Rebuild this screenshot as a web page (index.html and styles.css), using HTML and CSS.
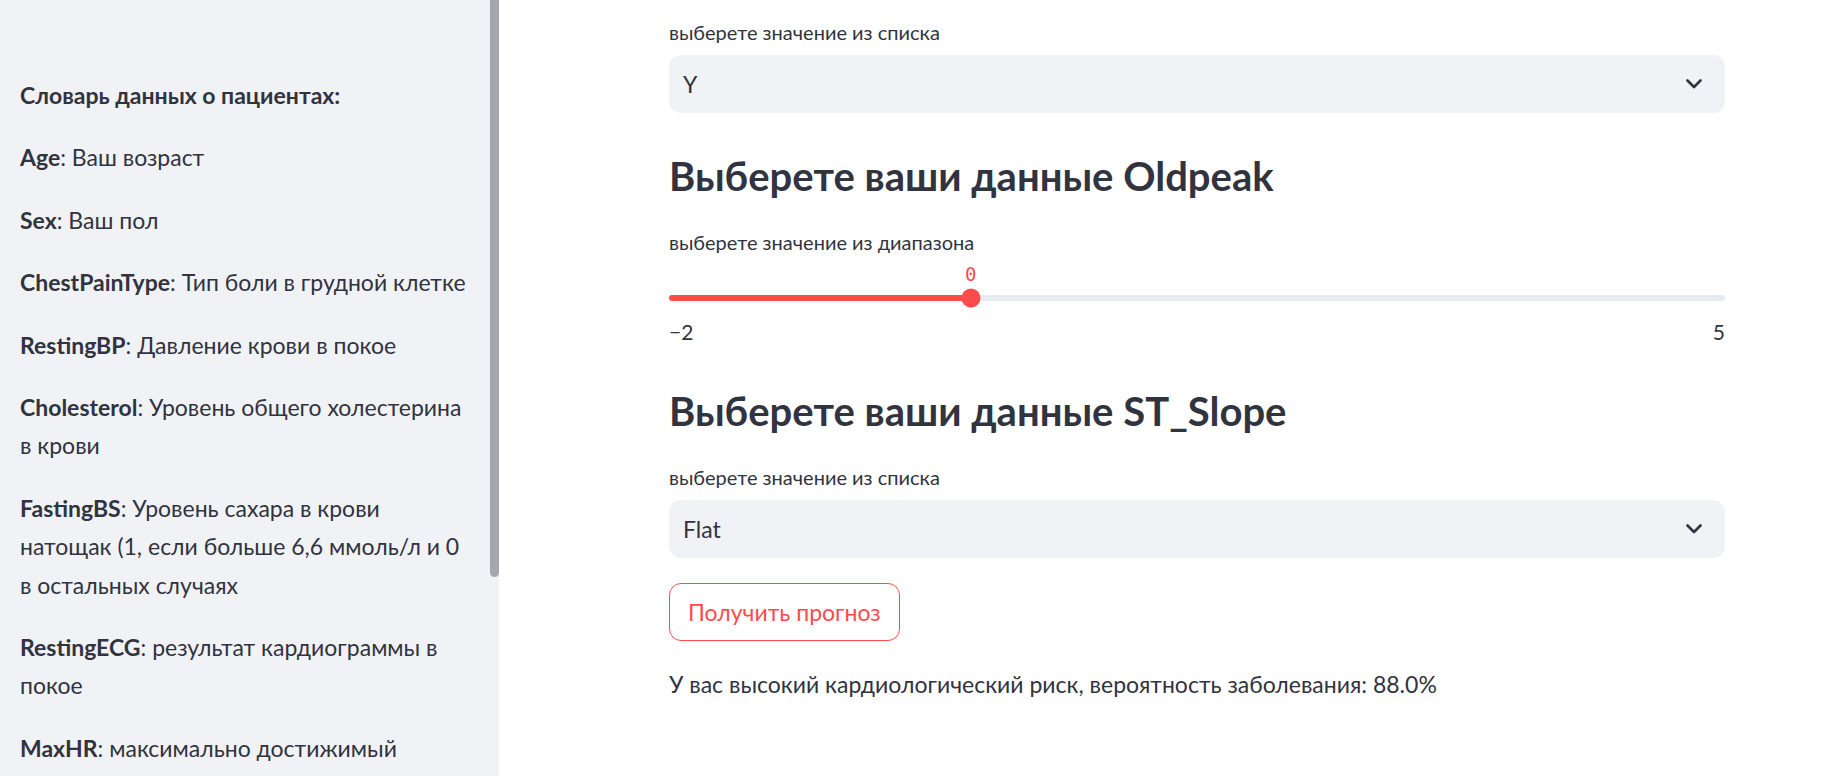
FILE: index.html
```html
<!DOCTYPE html>
<html lang="ru">
<head>
<meta charset="utf-8">
<title>Прогноз</title>
<link rel="stylesheet" href="styles.css">
</head>
<body>
<div class="app">
  <aside class="sidebar">
    <div class="sidebar-content">
      <p><b>Словарь данных о пациентах:</b></p>
      <p><b>Age</b>: Ваш возраст</p>
      <p><b>Sex</b>: Ваш пол</p>
      <p><b>ChestPainType</b>: Тип боли в грудной клетке</p>
      <p><b>RestingBP</b>: Давление крови в покое</p>
      <p><b>Cholesterol</b>: Уровень общего холестерина в крови</p>
      <p><b>FastingBS</b>: Уровень сахара в крови натощак (1, если больше 6,6 ммоль/л и 0 в остальных случаях</p>
      <p><b>RestingECG</b>: результат кардиограммы в покое</p>
      <p><b>MaxHR</b>: максимально достижимый сердечный ритм</p>
    </div>
    <div class="scrollbar"></div>
  </aside>
  <main class="main">
    <div class="block">
      <div class="label first">выберете значение из списка</div>
      <div class="select">
        <span class="select-value">Y</span>
        <svg class="chevron" width="16" height="10" viewBox="0 0 16 10"><polyline points="1.5,1.5 8,8 14.5,1.5" fill="none" stroke="#31333f" stroke-width="2.6" stroke-linecap="round" stroke-linejoin="round"/></svg>
      </div>

      <h3 class="heading">Выберете ваши данные Oldpeak</h3>
      <div class="label">выберете значение из диапазона</div>
      <div class="slider">
        <div class="slider-value-row">
          <span class="slider-value" style="left: 28.571%">0</span>
        </div>
        <div class="track">
          <div class="track-fill" style="width: 28.571%"></div>
          <div class="thumb" style="left: 28.571%"></div>
        </div>
        <div class="ticks"><span>−2</span><span>5</span></div>
      </div>

      <h3 class="heading second">Выберете ваши данные ST_Slope</h3>
      <div class="label">выберете значение из списка</div>
      <div class="select">
        <span class="select-value">Flat</span>
        <svg class="chevron" width="16" height="10" viewBox="0 0 16 10"><polyline points="1.5,1.5 8,8 14.5,1.5" fill="none" stroke="#31333f" stroke-width="2.6" stroke-linecap="round" stroke-linejoin="round"/></svg>
      </div>

      <button class="btn">Получить прогноз</button>
      <p class="result">У вас высокий кардиологический риск, вероятность заболевания: 88.0%</p>
    </div>
  </main>
</div>
</body>
</html>
```

FILE: styles.css
```css
html, body {
  margin: 0;
  padding: 0;
  height: 776px;
  overflow: hidden;
  background: #ffffff;
}

body {
  font-family: "Lato", "Roboto", "Noto Sans", sans-serif;
  color: #31333f;
}

.app {
  display: flex;
  height: 776px;
}

.sidebar {
  position: relative;
  width: 499px;
  flex: 0 0 499px;
  background: #f0f2f6;
  overflow: hidden;
}

.sidebar-content {
  width: 450px;
  padding: 76px 0 0 20px;
}

.sidebar-content p {
  margin: 0 0 24px 0;
  font-size: 23px;
  line-height: 38.4px;
}

.sidebar-content b {
  font-weight: 700;
}

.scrollbar {
  position: absolute;
  top: 0;
  right: 0;
  width: 9px;
  height: 577px;
  background: #a6a6ae;
  border-radius: 0 0 5px 5px;
}

.main {
  flex: 1;
  padding-left: 170px;
}

.block {
  width: 1056px;
  display: flex;
  flex-direction: column;
  align-items: flex-start;
}

.label {
  font-size: 20px;
  line-height: 30px;
  margin-top: 27.5px;
  margin-bottom: 8px;
}

.label.first {
  margin-top: 17px;
}

.select {
  box-sizing: border-box;
  width: 100%;
  height: 58px;
  background: #f0f2f6;
  border-radius: 12px;
  display: flex;
  align-items: center;
  justify-content: space-between;
  padding: 0 23px 0 14px;
}

.select-value {
  font-size: 23px;
}

.chevron {
  display: block;
}

.heading {
  margin: 38px 0 0 0;
  font-size: 40px;
  line-height: 50px;
  font-weight: 700;
  color: #31333f;
}

.heading + .label {
  margin-top: 26px;
}

.heading.second {
  margin-top: 42px;
}

.slider {
  width: 100%;
  margin-top: -3.3px;
}

.slider-value-row {
  position: relative;
  height: 24px;
}

.slider-value {
  position: absolute;
  top: 0;
  transform: translateX(-50%);
  font-family: "DejaVu Sans Mono", "Liberation Mono", monospace;
  font-size: 19px;
  line-height: 24px;
  color: #ff4b4b;
}

.track {
  position: relative;
  height: 6px;
  margin-top: 9px;
  background: #e6eaf1;
  border-radius: 3px;
}

.track-fill {
  height: 6px;
  background: #ff4b4b;
  border-radius: 3px;
}

.thumb {
  position: absolute;
  top: 50%;
  width: 19px;
  height: 19px;
  background: #ff4b4b;
  border-radius: 50%;
  transform: translate(-50%, -50%);
}

.ticks {
  display: flex;
  justify-content: space-between;
  margin-top: 19px;
  font-size: 21px;
  line-height: 24px;
  color: #31333f;
}

.btn {
  margin-top: 25px;
  box-sizing: border-box;
  height: 58px;
  padding: 0 18px;
  background: #ffffff;
  border: 1px solid #ff4b4b;
  border-radius: 12px;
  color: #ff4b4b;
  font-family: inherit;
  font-size: 23px;
  cursor: pointer;
}

.result {
  margin: 24px 0 0 0;
  font-size: 23px;
  line-height: 38.4px;
}
```
